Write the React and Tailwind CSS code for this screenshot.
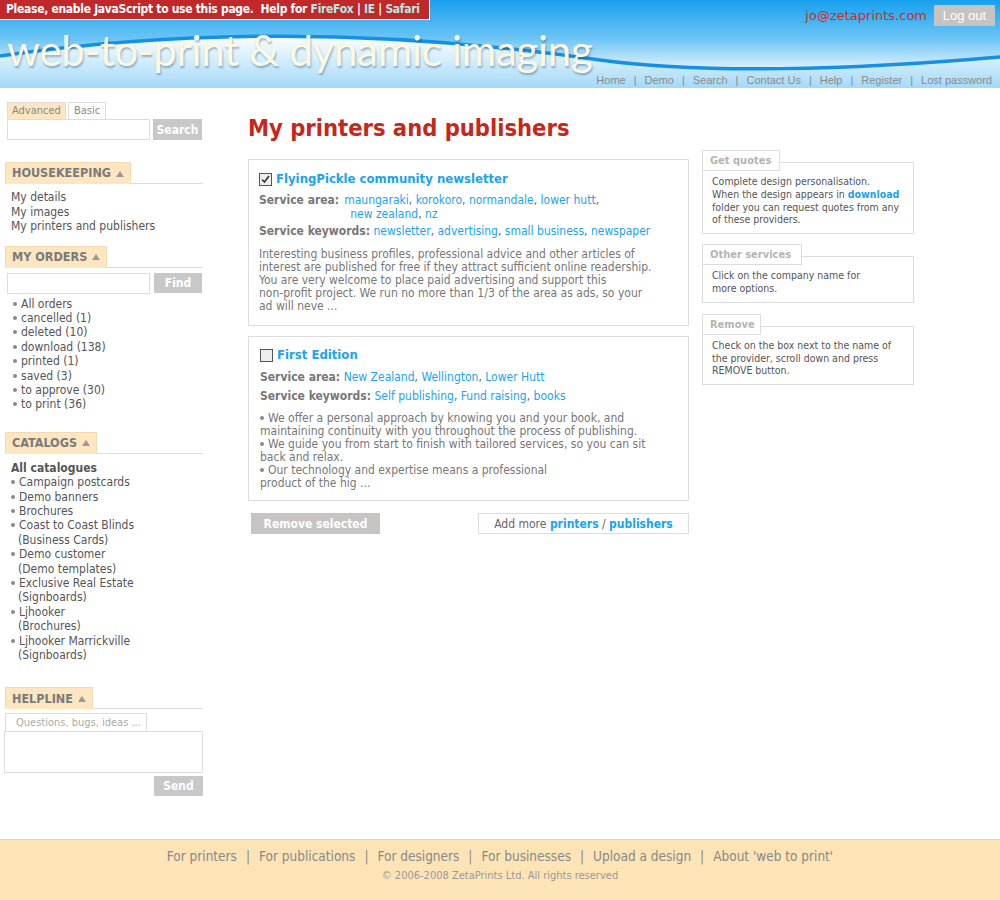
const font = { fontFamily: 'Tahoma, "DejaVu Sans Condensed", "DejaVu Sans", sans-serif' };

function Tri() {
  return (
    <span className="inline-block ml-[5px] w-0 h-0 border-l-[4px] border-r-[4px] border-b-[6px] border-l-transparent border-r-transparent border-b-[#999] align-[2px]"></span>
  );
}

function Dot() {
  return <span className="inline-block w-[4px] h-[4px] rounded-full bg-[#8a8a8a] mr-[4px] align-[2px]"></span>;
}

function SideTab({ label }) {
  return (
    <div className="border-b border-[#ddd] h-[22px]">
      <span className="inline-flex items-center h-[22px] px-[6px] bg-[#fde6c0] border border-b-0 border-[#f2dbb0] text-[12.5px] font-bold text-[#7a7a7a]">
        {label}
        <Tri />
      </span>
    </div>
  );
}

function A({ children }) {
  return <span className="text-[#1ca2ee]">{children}</span>;
}

function InfoBox({ title, tabW, children, className = "" }) {
  return (
    <div className={className}>
      <div
        className={`relative z-10 h-[21px] bg-white border border-[#ddd] text-[11px] font-bold text-[#b4b4b4] pl-[7px] leading-[19px] ${tabW}`}
      >
        {title}
      </div>
      <div className="-mt-[9px] border border-[#ddd] pt-[12px] pb-[7px] px-[9px] text-[10.5px] leading-[12.8px] text-[#555] whitespace-nowrap">
        {children}
      </div>
    </div>
  );
}

export default function App() {
  return (
    <div className="w-[1000px] h-[900px] bg-white flex flex-col overflow-hidden" style={font}>
      {/* Header */}
      <div className="relative h-[88px] shrink-0">
        <svg className="absolute inset-0" width="1000" height="88" viewBox="0 0 1000 88">
          <defs>
            <linearGradient id="sky" x1="0" y1="0" x2="0" y2="70" gradientUnits="userSpaceOnUse">
              <stop offset="0" stopColor="#17a0ee" />
              <stop offset="0.55" stopColor="#6cc4f5" />
              <stop offset="1" stopColor="#e2f4fd" />
            </linearGradient>
            <linearGradient id="low" x1="0" y1="34" x2="0" y2="88" gradientUnits="userSpaceOnUse">
              <stop offset="0" stopColor="#ffffff" />
              <stop offset="0.45" stopColor="#d6effc" />
              <stop offset="1" stopColor="#a4d9f7" />
            </linearGradient>
          </defs>
          <rect width="1000" height="88" fill="url(#sky)" />
          <path d="M0,56 C180,30 380,28 600,60 C700,74 850,70 1000,57 L1000,88 L0,88 Z" fill="url(#low)" />
          <path d="M0,56 C180,30 380,28 600,60 C700,74 850,70 1000,57" fill="none" stroke="#1590e4" strokeWidth="3.5" />
        </svg>

        <div className="absolute left-0 top-0 h-[20px] bg-[#c0282a] border-r border-b border-white pl-[6px] pr-[9px] text-[12px] font-bold text-white leading-[19px] tracking-[-0.3px]">
          Please, enable JavaScript to use this page.&nbsp; Help for <span className="text-[#b4ece4]">FireFox</span> | <span className="text-[#b4ece4]">IE</span> | <span className="text-[#b4ece4]">Safari</span>
        </div>

        <div className="relative flex flex-col h-full">
          <div className="flex justify-end items-center gap-[7px] pt-[5px] pr-[5px]">
            <span className="text-[13px] text-[#d42a1c]" style={{ fontFamily: '"DejaVu Sans", sans-serif' }}>jo@zetaprints.com</span>
            <span className="h-[21px] w-[61px] bg-[#c6c3c3] text-white text-[13px] flex items-center justify-center" style={{ fontFamily: '"Liberation Sans", sans-serif' }}>Log out</span>
          </div>
          <div
            className="absolute left-[7px] top-[25px] text-[42px] leading-[50px] text-[#fdf8e2] tracking-[-0.3px]"
            style={{ fontFamily: 'Lato, sans-serif', fontWeight: 400, textShadow: '1px 2px 2px rgba(0,60,110,0.35)' }}
          >
            web-to-print &amp; dynamic imaging
          </div>
          <div className="mt-auto flex justify-end pr-[8px] pb-[1px] text-[11px] text-[#8a8a8a] leading-[14px]" style={{ fontFamily: '"Liberation Sans", sans-serif' }}>
            {["Home", "Demo", "Search", "Contact Us", "Help", "Register", "Lost password"].map((t, i) => (
              <span key={t}>
                {i > 0 && <span className="mx-[8px]">|</span>}
                {t}
              </span>
            ))}
          </div>
        </div>
      </div>

      {/* Body */}
      <div className="flex h-[751px] shrink-0">
        {/* Sidebar */}
        <div className="w-[198px] ml-[5px] shrink-0 text-[12px] text-[#555]">
          <div className="mt-[14px] ml-[2px] flex gap-[2px] text-[11px]">
            <span className="h-[17px] px-[4px] bg-[#fde6c0] border border-b-0 border-[#ddd] text-[#888] leading-[16px]">Advanced</span>
            <span className="h-[17px] px-[5px] border border-b-0 border-[#ddd] text-[#888] leading-[16px]">Basic</span>
          </div>
          <div className="ml-[2px] flex gap-[3px]">
            <div className="w-[143px] h-[21px] border border-[#ddd]"></div>
            <div className="w-[49px] h-[21px] bg-[#c8c8c8] text-white font-bold flex items-center justify-center">Search</div>
          </div>

          <div className="mt-[22px]"><SideTab label="HOUSEKEEPING" /></div>
          <div className="mt-[6px] ml-[6px] leading-[14.5px]">
            <div>My details</div>
            <div>My images</div>
            <div>My printers and publishers</div>
          </div>

          <div className="mt-[12px]"><SideTab label="MY ORDERS" /></div>
          <div className="mt-[5px] ml-[2px] flex gap-[4px]">
            <div className="w-[143px] h-[21px] border border-[#ddd]"></div>
            <div className="w-[48px] h-[20px] bg-[#c8c8c8] text-white font-bold flex items-center justify-center">Find</div>
          </div>
          <div className="mt-[3px] ml-[8px] leading-[14.4px]">
            {["All orders", "cancelled (1)", "deleted (10)", "download (138)", "printed (1)", "saved (3)", "to approve (30)", "to print (36)"].map((t) => (
              <div key={t}><Dot />{t}</div>
            ))}
          </div>

          <div className="mt-[20px]"><SideTab label="CATALOGS" /></div>
          <div className="mt-[7px] ml-[6px] leading-[14.4px]">
            <div className="font-bold">All catalogues</div>
            {[
              ["Campaign postcards"],
              ["Demo banners"],
              ["Brochures"],
              ["Coast to Coast Blinds", "(Business Cards)"],
              ["Demo customer", "(Demo templates)"],
              ["Exclusive Real Estate", "(Signboards)"],
              ["Ljhooker", "(Brochures)"],
              ["Ljhooker Marrickville", "(Signboards)"],
            ].map(([a, b]) => (
              <div key={a}>
                <div><Dot />{a}</div>
                {b && <div className="pl-[7px]">{b}</div>}
              </div>
            ))}
          </div>

          <div className="mt-[25px]"><SideTab label="HELPLINE" /></div>
          <div className="mt-[4px] w-[142px] h-[18px] border border-b-0 border-[#ddd] text-[11px] text-[#aaa] pl-[10px] leading-[17px]">Questions, bugs, ideas ...</div>
          <div className="-ml-[1px] w-[199px] h-[42px] border border-[#ddd]"></div>
          <div className="mt-[3px] flex justify-end">
            <div className="w-[49px] h-[20px] bg-[#c8c8c8] text-white font-bold flex items-center justify-center">Send</div>
          </div>
        </div>

        {/* Main */}
        <div className="ml-[45px] w-[441px] shrink-0">
          <h1 className="mt-[25px] text-[23.5px] leading-[30px] font-bold text-[#c4281c]">
            My printers and publishers
          </h1>

          <div className="mt-[16px] border border-[#ddd] pt-[10px] pb-[12px] pl-[10px] pr-[10px] text-[12px] text-[#666]">
            <div className="flex items-center h-[18px]">
              <span className="w-[13px] h-[13px] border border-[#555] bg-[#eee] flex items-center justify-center mr-[4px]">
                <svg width="9" height="9" viewBox="0 0 9 9"><path d="M1 4.5 L3.5 7 L8 1" fill="none" stroke="#333" strokeWidth="1.6" /></svg>
              </span>
              <span className="text-[13px] font-bold text-[#1ca2ee]">FlyingPickle community newsletter</span>
            </div>
            <div className="mt-[5px] leading-[14px] flex">
              <span className="font-bold text-[#777] mr-[5px] shrink-0">Service area:</span>
              <span>
                <A>maungaraki</A>, <A>korokoro</A>, <A>normandale</A>, <A>lower hutt</A>,<br />
                <span className="pl-[6px]"><A>new zealand</A>, <A>nz</A></span>
              </span>
            </div>
            <div className="mt-[3px] leading-[14px]">
              <span className="font-bold text-[#777]">Service keywords:</span> <A>newsletter</A>, <A>advertising</A>, <A>small business</A>, <A>newspaper</A>
            </div>
            <div className="mt-[10px] leading-[13px] text-[#777] pr-[20px]">
              Interesting business profiles, professional advice and other articles of interest are published for free if they attract sufficient online readership. You are very welcome to place paid advertising and support this<br />
              non-profit project. We run no more than 1/3 of the area as ads, so your ad will neve ...
            </div>
          </div>

          <div className="mt-[10px] border border-[#ddd] pt-[9px] pb-[11px] pl-[11px] pr-[10px] text-[12px] text-[#666]">
            <div className="flex items-center h-[18px]">
              <span className="w-[13px] h-[13px] border border-[#555] bg-[#eee] mr-[4px]"></span>
              <span className="text-[13px] font-bold text-[#1ca2ee]">First Edition</span>
            </div>
            <div className="mt-[6px] leading-[14px]">
              <span className="font-bold text-[#777]">Service area:</span> <A>New Zealand</A>, <A>Wellington</A>, <A>Lower Hutt</A>
            </div>
            <div className="mt-[5px] leading-[14px]">
              <span className="font-bold text-[#777]">Service keywords:</span> <A>Self publishing</A>, <A>Fund raising</A>, <A>books</A>
            </div>
            <div className="mt-[9px] leading-[12.9px] text-[#777]">
              <Dot />We offer a personal approach by knowing you and your book, and<br />
              maintaining continuity with you throughout the process of publishing.<br />
              <Dot />We guide you from start to finish with tailored services, so you can sit<br />
              back and relax.<br />
              <Dot />Our technology and expertise means a professional<br />
              product of the hig ...
            </div>
          </div>

          <div className="mt-[12px] flex justify-between items-center">
            <div className="ml-[3px] w-[129px] h-[21px] bg-[#c8c4c4] text-white text-[12px] font-bold flex items-center justify-center">Remove selected</div>
            <div className="w-[211px] h-[21px] border border-[#ddd] text-[12px] text-[#666] flex items-center justify-center">
              Add more&nbsp;<span className="font-bold text-[#1ca2ee]">printers</span>&nbsp;/&nbsp;<span className="font-bold text-[#1ca2ee]">publishers</span>
            </div>
          </div>
        </div>

        {/* Right column */}
        <div className="ml-[13px] w-[212px] shrink-0 pt-[62px]">
          <InfoBox title="Get quotes" tabW="w-[78px]">
            Complete design personalisation.<br />
            When the design appears in <span className="font-bold text-[#1ca2ee]">download</span><br />
            folder you can request quotes from any<br />
            of these providers.
          </InfoBox>
          <InfoBox title="Other services" tabW="w-[100px]" className="mt-[10px]">
            Click on the company name for<br />
            more options.
          </InfoBox>
          <InfoBox title="Remove" tabW="w-[59px]" className="mt-[11px]">
            Check on the box next to the name of<br />
            the provider, scroll down and press<br />
            REMOVE button.
          </InfoBox>
        </div>
      </div>

      {/* Footer */}
      <div className="flex-1 bg-[#fde4b7] border-t border-[#f8d08c] flex flex-col items-center pt-[8px]">
        <div className="text-[13.5px] text-[#888] leading-[16px]">
          {["For printers", "For publications", "For designers", "For businesses", "Upload a design", "About 'web to print'"].map((t, i) => (
            <span key={t}>
              {i > 0 && <span className="mx-[9px]">|</span>}
              {t}
            </span>
          ))}
        </div>
        <div className="mt-[4px] text-[11px] text-[#999]">© 2006-2008 ZetaPrints Ltd. All rights reserved</div>
      </div>
    </div>
  );
}
